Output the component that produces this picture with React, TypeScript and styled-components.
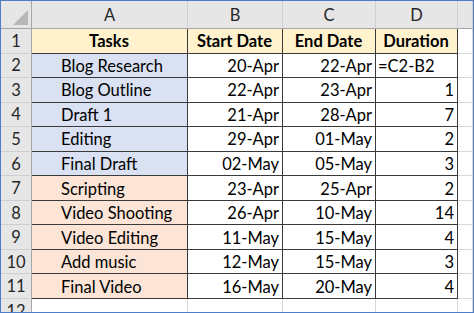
import { createGlobalStyle, styled } from "styled-components";

const GlobalStyle = createGlobalStyle`
  html, body {
    margin: 0;
    padding: 0;
    background: #ffffff;
  }
`;

const Frame = styled.div`
  width: 474px;
  height: 313px;
  box-sizing: border-box;
  border: 1px solid #4f7cc9;
  overflow: hidden;
  background: #ffffff;
  font-family: Lato, "Liberation Sans", sans-serif;
`;

const Sheet = styled.div`
  display: grid;
  grid-template-columns: 31px 156px 95px 93px 82px 1fr;
  grid-template-rows: 28px repeat(12, 24.55px);
`;

type Tone = "plain" | "head" | "blue" | "peach";

const fills: Record<Tone, string> = {
  plain: "#ffffff",
  head: "#fff2cc",
  blue: "#d9e1f2",
  peach: "#fce4d6",
};

const Corner = styled.div`
  position: relative;
  background: #e6e6e6;
  box-sizing: border-box;
  border-right: 1px solid #a6a6a6;
  border-bottom: 1px solid #a6a6a6;

  &::after {
    content: "";
    position: absolute;
    right: 3px;
    bottom: 3px;
    width: 0;
    height: 0;
    border-left: 15px solid transparent;
    border-bottom: 15px solid #b7b7b7;
  }
`;

const ColHead = styled.div`
  background: #e6e6e6;
  box-sizing: border-box;
  border-right: 1px solid #cfcfcf;
  border-bottom: 1px solid #a6a6a6;
  display: flex;
  align-items: center;
  justify-content: center;
  font-size: 16.5px;
  color: #262626;
  padding-top: 1px;
`;

const RowHead = styled.div`
  background: #e6e6e6;
  box-sizing: border-box;
  border-right: 1px solid #a6a6a6;
  border-bottom: 1px solid #cfcfcf;
  display: flex;
  align-items: center;
  justify-content: center;
  font-size: 16.5px;
  color: #262626;
`;

const Cell = styled.div<{
  $tone?: Tone;
  $align?: "left" | "center" | "right";
  $bold?: boolean;
  $indent?: number;
  $edge?: boolean;
}>`
  box-sizing: border-box;
  background: ${(p) => fills[p.$tone ?? "plain"]};
  border-right: 1px solid ${(p) => (p.$edge ? "#3a3a3a" : "#d9d9d9")};
  border-bottom: 1px solid ${(p) => (p.$edge ? "#3a3a3a" : "#d9d9d9")};
  display: flex;
  align-items: center;
  justify-content: ${(p) =>
    p.$align === "center"
      ? "center"
      : p.$align === "right"
      ? "flex-end"
      : "flex-start"};
  padding: 1px 3px 0 ${(p) => p.$indent ?? 2}px;
  font-size: 16.5px;
  font-weight: ${(p) => (p.$bold ? 700 : 400)};
  color: #000000;
  white-space: nowrap;
  overflow: hidden;
`;

const rows: [string, string, string, string][] = [
  ["Blog Research", "20-Apr", "22-Apr", "=C2-B2"],
  ["Blog Outline", "22-Apr", "23-Apr", "1"],
  ["Draft 1", "21-Apr", "28-Apr", "7"],
  ["Editing", "29-Apr", "01-May", "2"],
  ["Final Draft", "02-May", "05-May", "3"],
  ["Scripting", "23-Apr", "25-Apr", "2"],
  ["Video Shooting", "26-Apr", "10-May", "14"],
  ["Video Editing", "11-May", "15-May", "4"],
  ["Add music", "12-May", "15-May", "3"],
  ["Final Video", "16-May", "20-May", "4"],
];

export default function App() {
  return (
    <>
      <GlobalStyle />
      <Frame>
        <Sheet>
          <Corner />
          {["A", "B", "C", "D", ""].map((c, i) => (
            <ColHead key={i}>{c}</ColHead>
          ))}

          <RowHead>1</RowHead>
          <Cell $tone="head" $align="center" $bold $edge>
            Tasks
          </Cell>
          <Cell $tone="head" $align="center" $bold $edge>
            Start Date
          </Cell>
          <Cell $tone="head" $align="center" $bold $edge>
            End Date
          </Cell>
          <Cell $tone="head" $align="center" $bold $edge>
            Duration
          </Cell>
          <Cell />

          {rows.map(([task, start, end, dur], i) => (
            <>
              <RowHead key={`r${i}`}>{i + 2}</RowHead>
              <Cell key={`a${i}`} $tone={i < 5 ? "blue" : "peach"} $indent={29} $edge>
                {task}
              </Cell>
              <Cell key={`b${i}`} $align="right" $edge>
                {start}
              </Cell>
              <Cell key={`c${i}`} $align="right" $edge>
                {end}
              </Cell>
              <Cell key={`d${i}`} $align={dur.startsWith("=") ? "left" : "right"} $edge>
                {dur}
              </Cell>
              <Cell key={`e${i}`} />
            </>
          ))}

          <RowHead>12</RowHead>
          <Cell />
          <Cell />
          <Cell />
          <Cell />
          <Cell />
        </Sheet>
      </Frame>
    </>
  );
}
